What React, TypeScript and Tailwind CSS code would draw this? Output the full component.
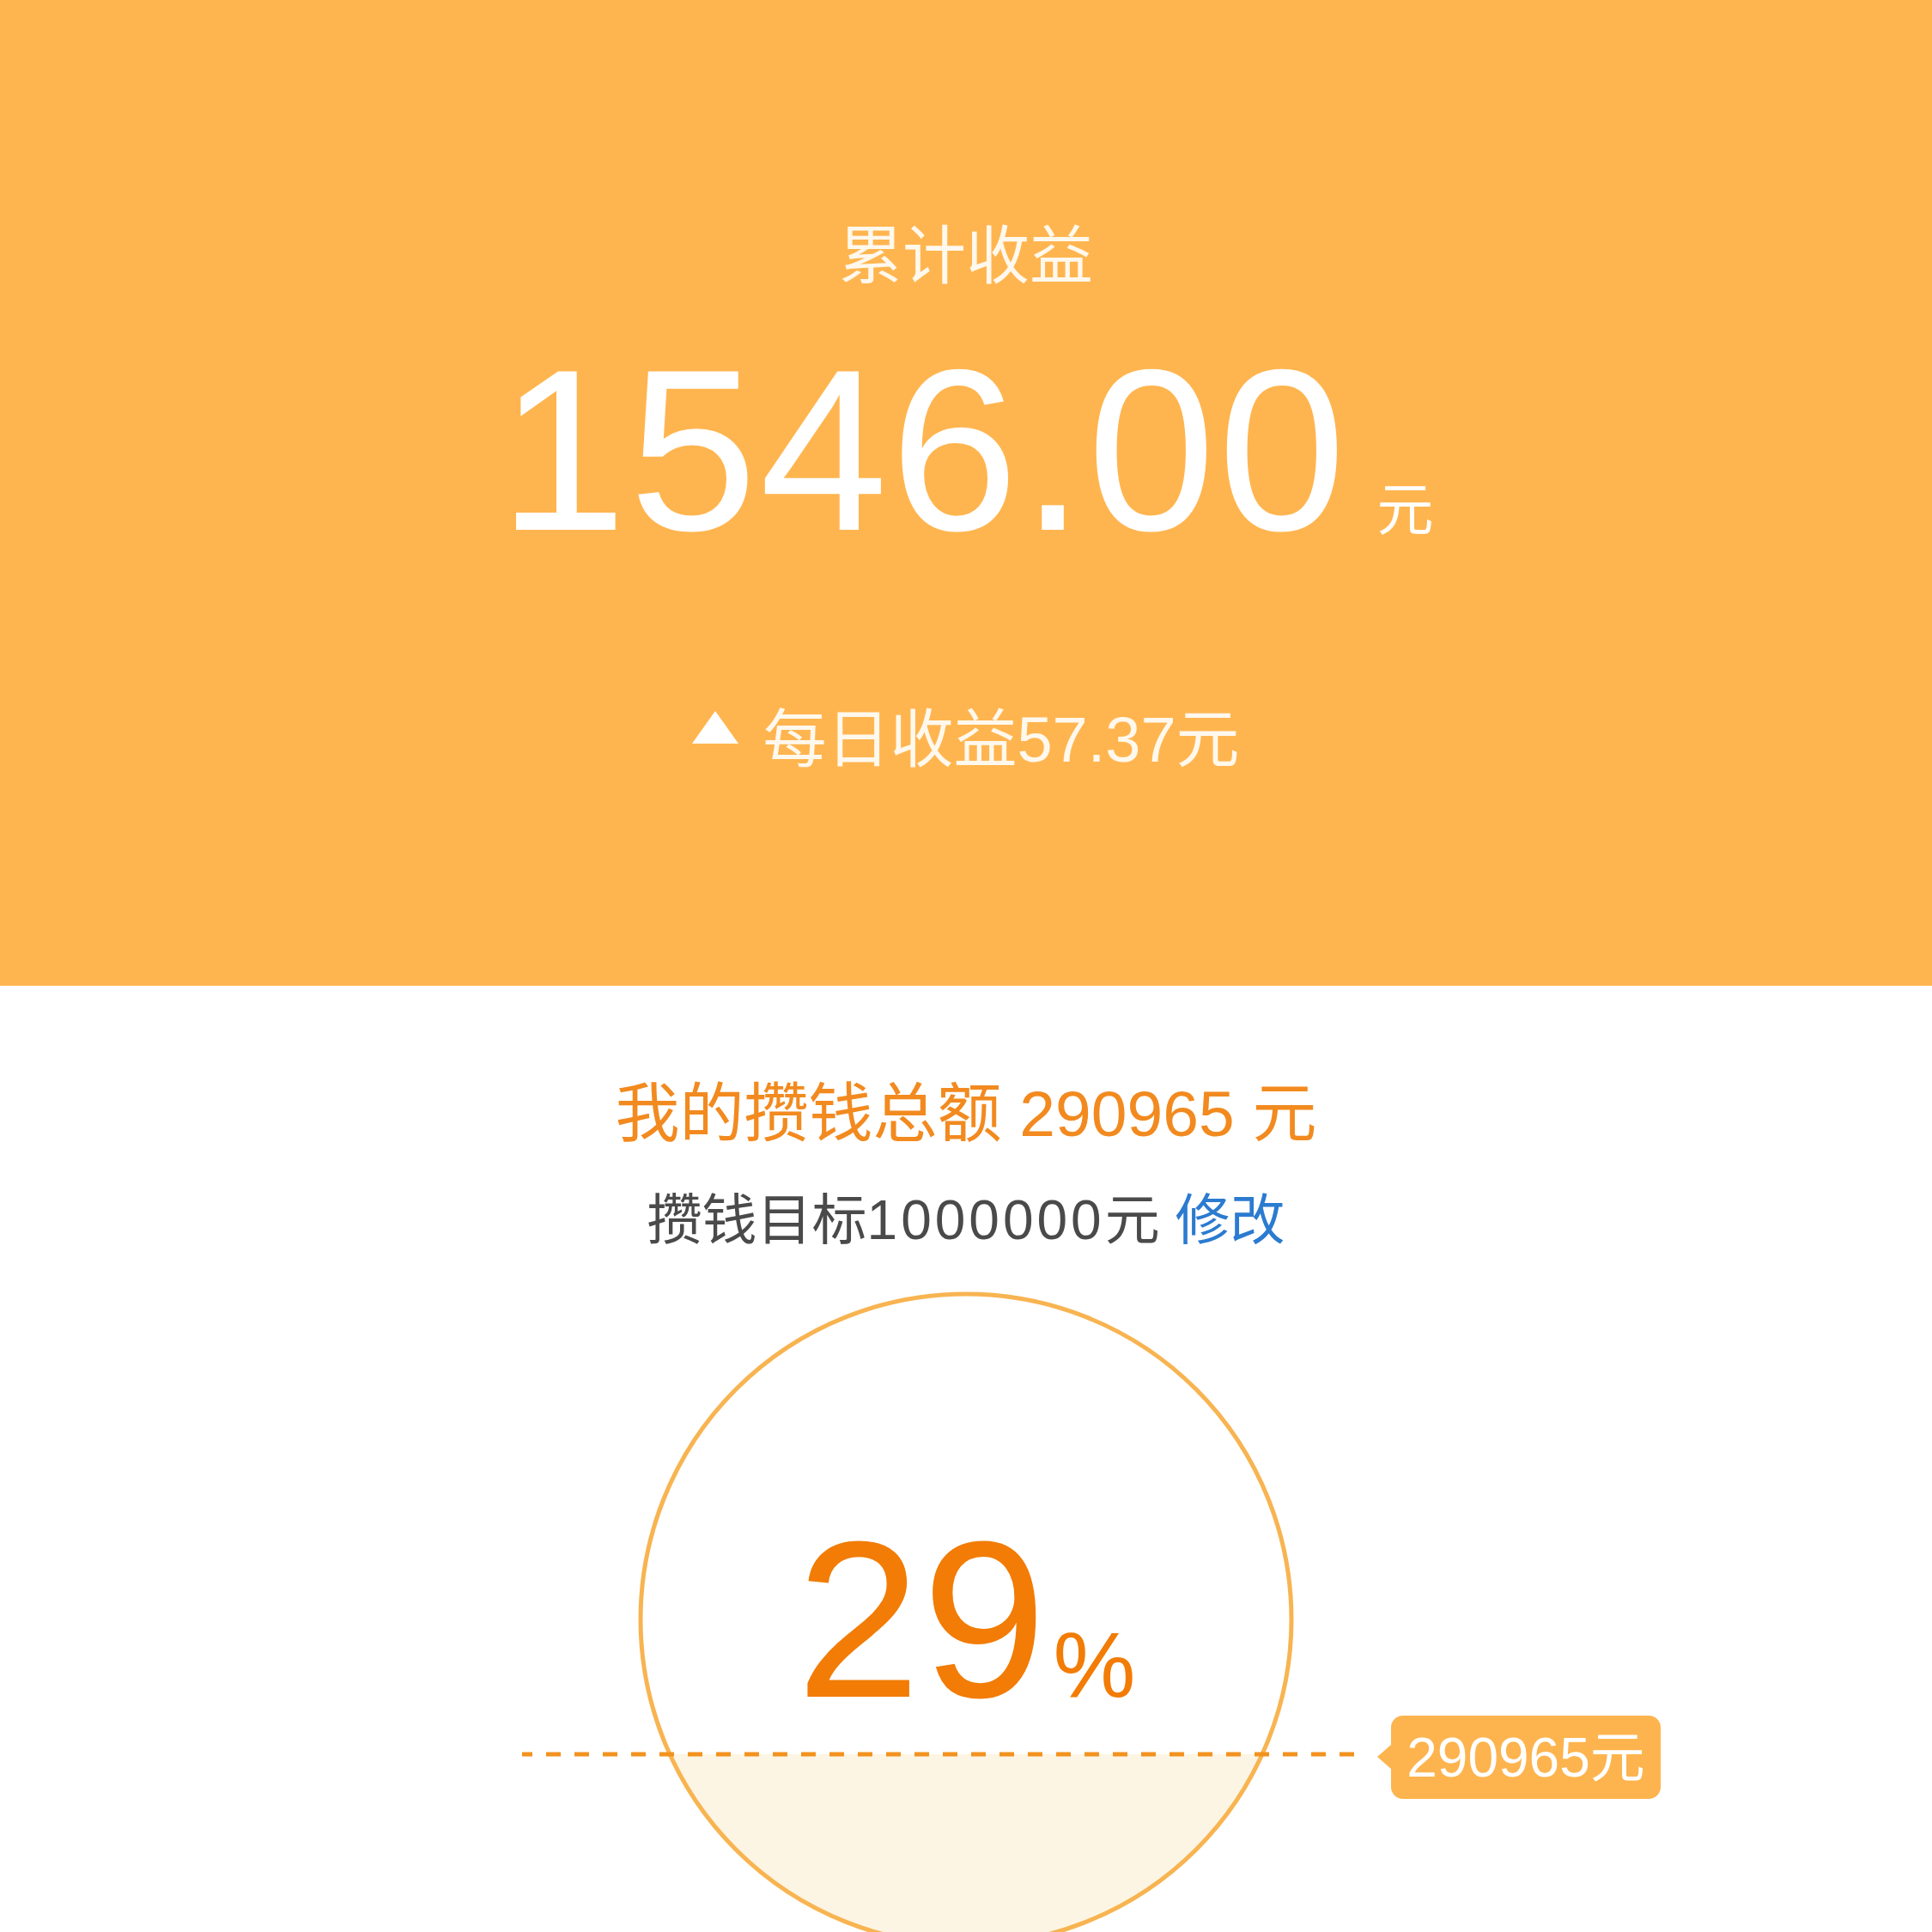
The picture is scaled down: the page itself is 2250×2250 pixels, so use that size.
import React from "react";

const FONT = { fontFamily: '"Liberation Sans", "Noto Sans CJK SC", sans-serif' };

function Banner() {
  return (
    <div className="w-full h-[1148px] bg-[#ffb54f] flex flex-col items-center text-white">
      <div className="pt-[254px] text-[74px] leading-[90px] text-white/90">累计收益</div>
      <div className="mt-[46px] flex items-baseline text-[268px] leading-none">
        <span className="tracking-[3px]">1546.00</span>
        <span className="ml-[33px] text-[66px] leading-none">元</span>
      </div>
      <div className="mt-[159px] flex items-start text-[74px] leading-[90px] text-white/90">
        <svg className="mt-[11px] mr-[28px]" width="54" height="38" viewBox="0 0 54 38">
          <polygon points="27,0 54,38 0,38" fill="#ffffff" />
        </svg>
        <span>每日收益57.37元</span>
      </div>
    </div>
  );
}

function Chart() {
  return (
    <div className="relative mt-[19px] w-full h-[770px]">
      <svg className="absolute inset-0" width="2250" height="770" viewBox="0 0 2250 770">
        <defs>
          <clipPath id="below">
            <rect x="0" y="563" width="2250" height="300" />
          </clipPath>
        </defs>
        <circle cx="1125" cy="406" r="379" fill="#fdf5e3" clipPath="url(#below)" />
        <circle cx="1125" cy="406" r="379" fill="none" stroke="#f8b451" strokeWidth="5" />
        <line
          x1="608"
          y1="563"
          x2="1588"
          y2="563"
          stroke="#f2921f"
          strokeWidth="5"
          strokeDasharray="17 16"
          strokeDashoffset="5"
        />
      </svg>
      <div className="absolute left-0 right-0 top-[276px] flex justify-center items-baseline text-[#f27c06] leading-none">
        <span className="text-[260px] leading-none tracking-[2px]">29</span>
        <span className="text-[108px] leading-none ml-[6px]">%</span>
      </div>
      <div className="absolute left-[1620px] top-[518px] w-[314px] h-[97px] rounded-[14px] bg-[#fdb44e] flex items-center justify-center text-white text-[64px] leading-none">
        <div className="absolute right-full top-[34px] w-0 h-0 border-y-[14px] border-y-transparent border-r-[16px] border-r-[#fdb44e]" />
        <span>290965元</span>
      </div>
    </div>
  );
}

export default function App() {
  return (
    <div className="w-[2250px] h-[2250px] overflow-hidden bg-white" style={FONT}>
      <Banner />
      <div className="flex flex-col items-center">
        <div className="pt-[104px] text-[75px] leading-[90px] text-[#f28a1f]">
          <span>我的攒钱总额</span>
          <span> 290965 </span>
          <span>元</span>
        </div>
        <div className="mt-[39px] text-[64px] leading-[80px] text-[#4a4a4a]">
          <span>攒钱目标</span>
          <span className="tracking-[4px]">1000000</span>
          <span>元 </span>
          <span className="text-[#2b7bd0]">修改</span>
        </div>
      </div>
      <Chart />
    </div>
  );
}
